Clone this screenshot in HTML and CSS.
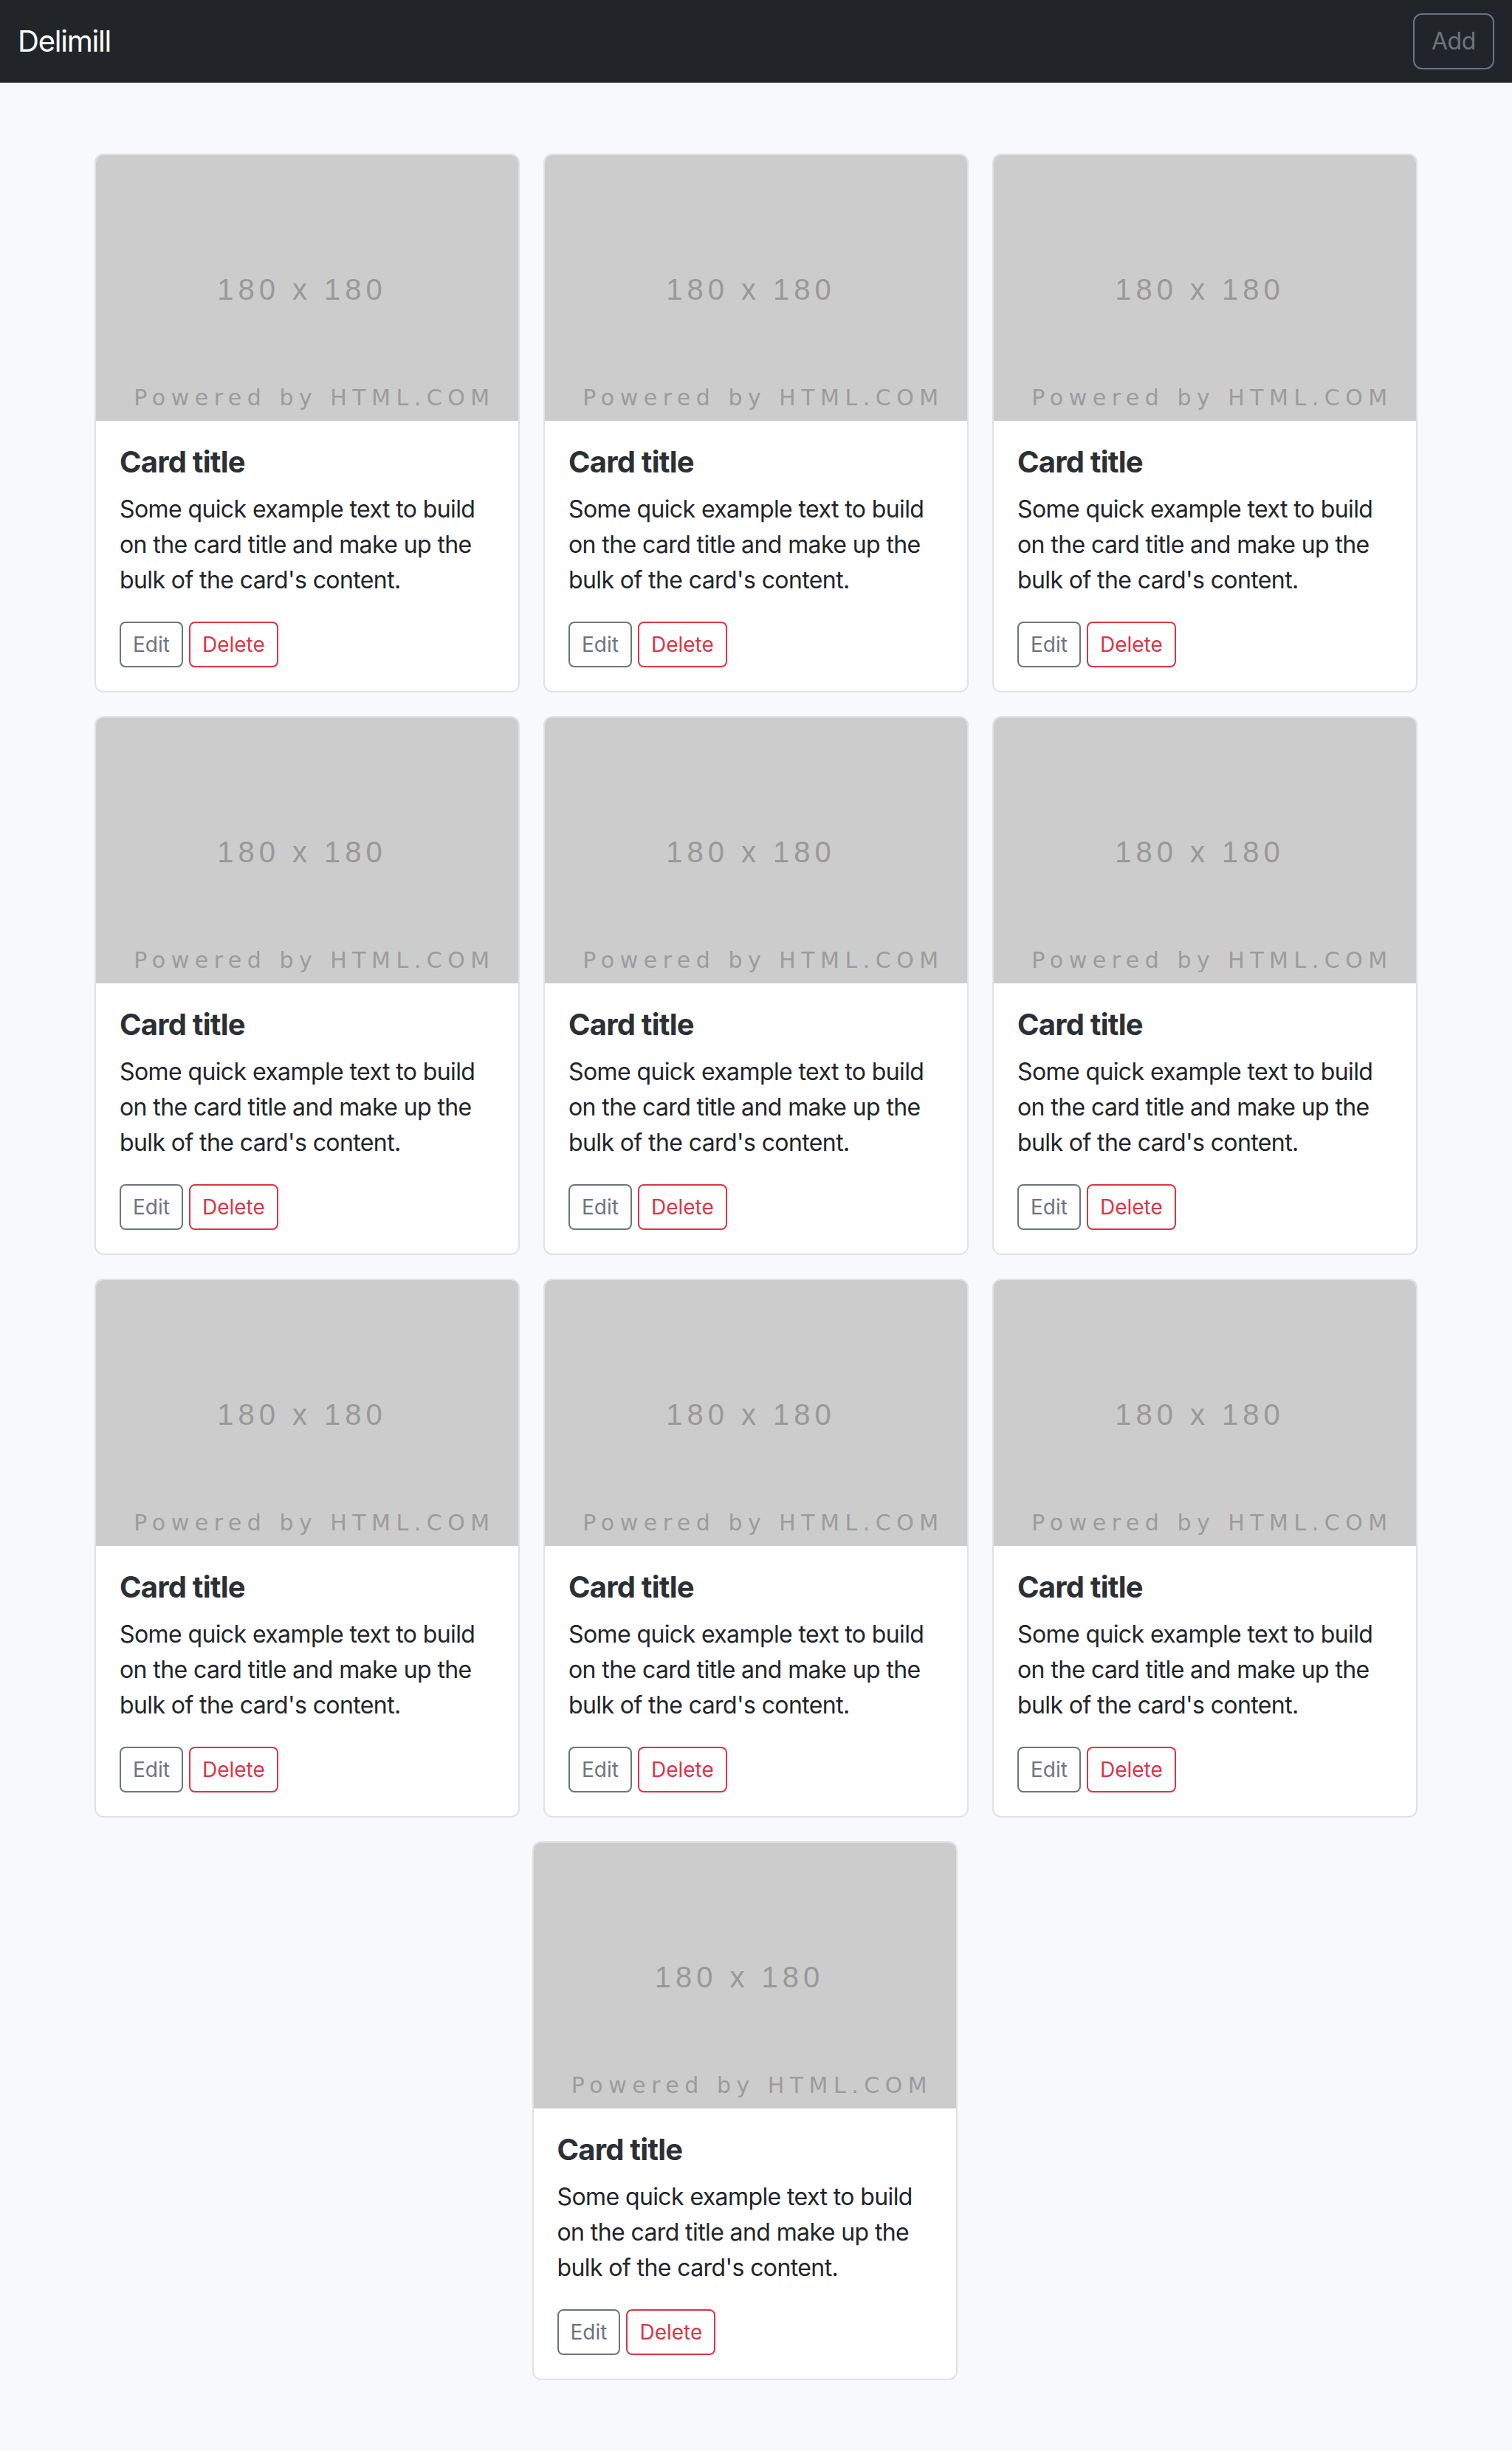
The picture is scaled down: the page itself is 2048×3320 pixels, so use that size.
FILE: index.html
```html
<!DOCTYPE html>
<html lang="en">
<head>
<meta charset="utf-8">
<title>Delimill</title>
<link rel="stylesheet" href="styles.css">
</head>
<body>
<nav class="navbar">
  <span class="brand">Delimill</span>
  <button class="btn-add" type="button">Add</button>
</nav>
<main class="cards">
  <div class="card"><div class="thumb"><span class="thumb-size">180 x 180</span><span class="thumb-credit">Powered by HTML.COM</span></div><div class="card-body"><h5 class="card-title">Card title</h5><p class="card-text">Some quick example text to build on the card title and make up the bulk of the card's content.</p><div class="actions"><button class="btn-sm btn-edit" type="button">Edit</button><button class="btn-sm btn-delete" type="button">Delete</button></div></div></div>
  <div class="card"><div class="thumb"><span class="thumb-size">180 x 180</span><span class="thumb-credit">Powered by HTML.COM</span></div><div class="card-body"><h5 class="card-title">Card title</h5><p class="card-text">Some quick example text to build on the card title and make up the bulk of the card's content.</p><div class="actions"><button class="btn-sm btn-edit" type="button">Edit</button><button class="btn-sm btn-delete" type="button">Delete</button></div></div></div>
  <div class="card"><div class="thumb"><span class="thumb-size">180 x 180</span><span class="thumb-credit">Powered by HTML.COM</span></div><div class="card-body"><h5 class="card-title">Card title</h5><p class="card-text">Some quick example text to build on the card title and make up the bulk of the card's content.</p><div class="actions"><button class="btn-sm btn-edit" type="button">Edit</button><button class="btn-sm btn-delete" type="button">Delete</button></div></div></div>
  <div class="card"><div class="thumb"><span class="thumb-size">180 x 180</span><span class="thumb-credit">Powered by HTML.COM</span></div><div class="card-body"><h5 class="card-title">Card title</h5><p class="card-text">Some quick example text to build on the card title and make up the bulk of the card's content.</p><div class="actions"><button class="btn-sm btn-edit" type="button">Edit</button><button class="btn-sm btn-delete" type="button">Delete</button></div></div></div>
  <div class="card"><div class="thumb"><span class="thumb-size">180 x 180</span><span class="thumb-credit">Powered by HTML.COM</span></div><div class="card-body"><h5 class="card-title">Card title</h5><p class="card-text">Some quick example text to build on the card title and make up the bulk of the card's content.</p><div class="actions"><button class="btn-sm btn-edit" type="button">Edit</button><button class="btn-sm btn-delete" type="button">Delete</button></div></div></div>
  <div class="card"><div class="thumb"><span class="thumb-size">180 x 180</span><span class="thumb-credit">Powered by HTML.COM</span></div><div class="card-body"><h5 class="card-title">Card title</h5><p class="card-text">Some quick example text to build on the card title and make up the bulk of the card's content.</p><div class="actions"><button class="btn-sm btn-edit" type="button">Edit</button><button class="btn-sm btn-delete" type="button">Delete</button></div></div></div>
  <div class="card"><div class="thumb"><span class="thumb-size">180 x 180</span><span class="thumb-credit">Powered by HTML.COM</span></div><div class="card-body"><h5 class="card-title">Card title</h5><p class="card-text">Some quick example text to build on the card title and make up the bulk of the card's content.</p><div class="actions"><button class="btn-sm btn-edit" type="button">Edit</button><button class="btn-sm btn-delete" type="button">Delete</button></div></div></div>
  <div class="card"><div class="thumb"><span class="thumb-size">180 x 180</span><span class="thumb-credit">Powered by HTML.COM</span></div><div class="card-body"><h5 class="card-title">Card title</h5><p class="card-text">Some quick example text to build on the card title and make up the bulk of the card's content.</p><div class="actions"><button class="btn-sm btn-edit" type="button">Edit</button><button class="btn-sm btn-delete" type="button">Delete</button></div></div></div>
  <div class="card"><div class="thumb"><span class="thumb-size">180 x 180</span><span class="thumb-credit">Powered by HTML.COM</span></div><div class="card-body"><h5 class="card-title">Card title</h5><p class="card-text">Some quick example text to build on the card title and make up the bulk of the card's content.</p><div class="actions"><button class="btn-sm btn-edit" type="button">Edit</button><button class="btn-sm btn-delete" type="button">Delete</button></div></div></div>
  <div class="card"><div class="thumb"><span class="thumb-size">180 x 180</span><span class="thumb-credit">Powered by HTML.COM</span></div><div class="card-body"><h5 class="card-title">Card title</h5><p class="card-text">Some quick example text to build on the card title and make up the bulk of the card's content.</p><div class="actions"><button class="btn-sm btn-edit" type="button">Edit</button><button class="btn-sm btn-delete" type="button">Delete</button></div></div></div>
</main>
</body>
</html>
```
FILE: styles.css
```css
* { box-sizing: border-box; }

body {
  margin: 0;
  background: #f8f9fa;
  font-family: Inter, "Noto Sans", sans-serif;
  color: #212529;
}

.navbar {
  height: 112px;
  background: #212529;
  display: flex;
  align-items: center;
  justify-content: space-between;
  padding: 0 24px;
}

.brand {
  color: #ffffff;
  font-size: 40px;
  line-height: 48px;
  letter-spacing: -1.2px;
}

.btn-add {
  font-family: Inter, "Noto Sans", sans-serif;
  font-size: 32px;
  line-height: 48px;
  padding: 12px 23px;
  border: 2px solid #6c757d;
  border-radius: 12px;
  color: #6c757d;
  background: transparent;
  letter-spacing: -0.4px;
}

.cards {
  width: 1792px;
  margin: 0 auto;
  padding: 96px 0;
  display: flex;
  flex-wrap: wrap;
  justify-content: center;
  gap: 32px;
}

.card {
  width: 576px;
  background: #ffffff;
  border: 2px solid #e0e1e2;
  border-radius: 12px;
  overflow: hidden;
}

.cards > .card:last-child:nth-child(3n+1) {
  margin-right: 31px;
}

.thumb {
  height: 360px;
  background: #cccccc;
  display: flex;
  flex-direction: column;
  align-items: center;
}

.thumb-size {
  margin-top: 160px;
  padding-right: 14px;
  font-family: "Liberation Sans", Arial, sans-serif;
  font-size: 40px;
  line-height: 44px;
  letter-spacing: 6px;
  color: #999999;
}

.thumb-credit {
  margin-top: auto;
  margin-bottom: 14px;
  padding-left: 20px;
  font-family: "DejaVu Sans", sans-serif;
  font-size: 30px;
  line-height: 34px;
  letter-spacing: 7.5px;
  color: #9c9c9c;
}

.card-body {
  padding: 32px;
}

.card-title {
  margin: 0 0 16px;
  font-size: 40px;
  line-height: 48px;
  font-weight: 700;
  letter-spacing: -0.8px;
  color: #2b3035;
}

.card-text {
  margin: 0 0 32px;
  font-size: 32px;
  line-height: 48px;
  letter-spacing: -0.6px;
}

.actions {
  display: flex;
  gap: 8px;
}

.btn-sm {
  font-family: Inter, "Noto Sans", sans-serif;
  font-size: 28px;
  line-height: 42px;
  padding: 8px 16px;
  border: 2px solid;
  border-radius: 8px;
  background: transparent;
}

.btn-edit {
  color: #6c757d;
  border-color: #6c757d;
}

.btn-delete {
  color: #dc3545;
  border-color: #dc3545;
}
```
